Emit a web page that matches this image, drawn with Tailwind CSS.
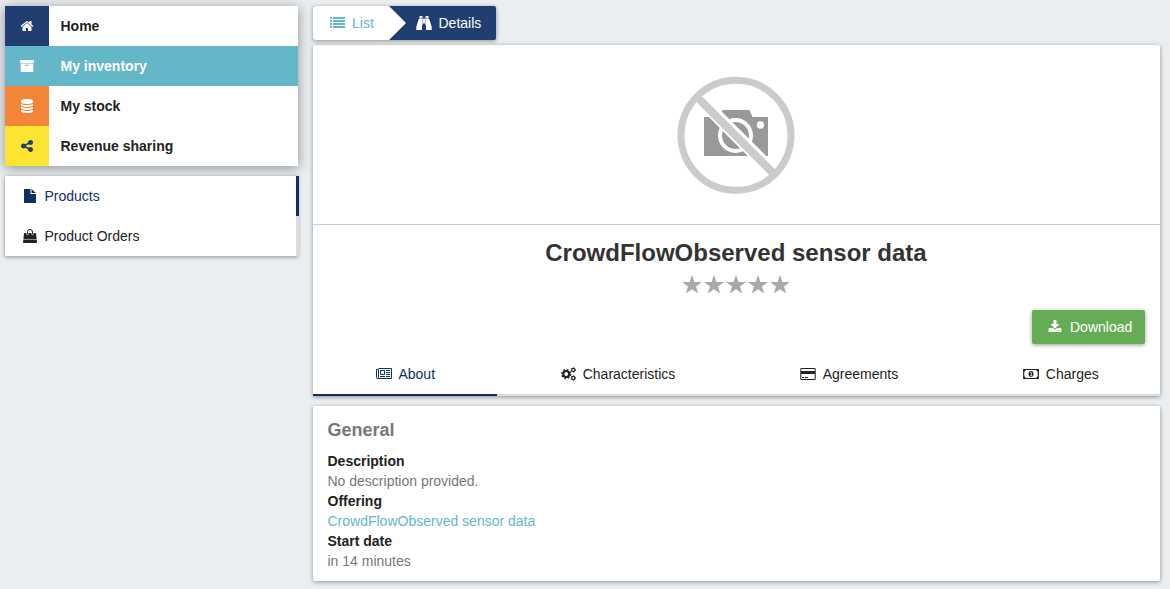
<!DOCTYPE html>
<html lang="en">
<head>
<meta charset="utf-8">
<title>My inventory</title>
<script src="https://cdn.jsdelivr.net/npm/@tailwindcss/browser@4"></script>
</head>
<body class="h-[589px] overflow-hidden bg-[#eaeef1] font-['Liberation_Sans',Arial,sans-serif] text-sm leading-5 text-[#222]">
<div class="flex gap-[15px] pt-1.5 pl-[5px]">
  <aside class="flex w-[293px] shrink-0 flex-col gap-2.5">
    <nav class="bg-white font-bold shadow-[0_2px_12px_rgba(0,0,0,0.4)]">
      <a class="flex h-10 items-center"><span class="flex h-10 w-11 items-center justify-center bg-[#203e6f] text-white"><svg class="size-3.5" viewBox="0 0 1792 1792" fill="currentColor"><path d="M1472 992v480q0 26-19 45t-45 19h-384v-384h-256v384h-384q-26 0-45-19t-19-45v-480q0-1 .5-3t.5-3l575-474 575 474q1 2 1 6zm223-69l-62 74q-8 9-21 11h-3q-13 0-21-7l-692-577-692 577q-12 8-24 7-13-2-21-11l-62-74q-8-10-7-23.5t11-21.5l719-599q32-26 76-26t76 26l244 204v-195q0-14 9-23t23-9h192q14 0 23 9t9 23v408l219 182q10 8 11 21.5t-7 23.5z"/></svg></span><span class="pl-[11.500px]">Home</span></a>
      <a class="flex h-10 items-center bg-[#64b6c9] text-white"><span class="flex h-10 w-11 items-center justify-center"><svg class="size-3.5" viewBox="0 0 14 14" fill="currentColor"><path d="M0 1h14v3H0zM.7 4.500h12.600V13H.7zM5.500 5.800a.5.5 0 0 0 0 1h3a.5.5 0 0 0 0-1z" fill-rule="evenodd"/></svg></span><span class="pl-[11.500px]">My inventory</span></a>
      <a class="flex h-10 items-center"><span class="flex h-10 w-11 items-center justify-center bg-[#f28538] text-white"><svg class="size-3.5" viewBox="0 0 1792 1792" fill="currentColor"><path d="M896 768q237 0 443-43t325-127v170q0 69-103 128t-280 93.5-385 34.5-385-34.5-280-93.5-103-128v-170q119 84 325 127t443 43zm0 768q237 0 443-43t325-127v170q0 69-103 128t-280 93.5-385 34.5-385-34.5-280-93.5-103-128v-170q119 84 325 127t443 43zm0-384q237 0 443-43t325-127v170q0 69-103 128t-280 93.5-385 34.5-385-34.5-280-93.5-103-128v-170q119 84 325 127t443 43zm0-1152q208 0 385 34.5t280 93.5 103 128v128q0 69-103 128t-280 93.5-385 34.5-385-34.5-280-93.5-103-128v-128q0-69 103-128t280-93.5 385-34.5z"/></svg></span><span class="pl-[11.500px]">My stock</span></a>
      <a class="flex h-10 items-center"><span class="flex h-10 w-11 items-center justify-center bg-[#fbe532] text-[#203e6f]"><svg class="size-3.5" viewBox="0 0 1792 1792" fill="currentColor"><path d="M1344 1024q133 0 226.5 93.5t93.5 226.5-93.5 226.5-226.5 93.5-226.5-93.5-93.5-226.5q0-12 2-34l-360-180q-92 86-218 86-133 0-226.5-93.5t-93.5-226.5 93.5-226.5 226.5-93.5q126 0 218 86l360-180q-2-22-2-34 0-133 93.5-226.5t226.5-93.5 226.500 93.500 93.500 226.500-93.500 226.500-226.500 93.500q-126 0-218-86l-360 180q2 22 2 34t-2 34l360 180q92-86 218-86z"/></svg></span><span class="pl-[11.500px]">Revenue sharing</span></a>
    </nav>
    <nav class="bg-white shadow-[0_1px_4px_rgba(0,0,0,0.4)]">
      <a class="-mr-px flex h-10 items-center gap-[7.500px] border-r-[3px] border-[#10305f] pl-[18px] text-[#10305f]"><svg class="size-3.5" viewBox="0 0 14 14" fill="currentColor"><path d="M1 0h6.500v5H13v9H1zM8.500 0 13 4H8.500z"/></svg>Products</a>
      <a class="-mr-px flex h-10 items-center gap-[7.500px] border-r-[3px] border-[#ddd] pl-[18px]"><svg class="size-3.5" viewBox="0 0 1792 1792" fill="currentColor"><path d="M1757 1408l35 313q3 28-16 50-19 21-48 21h-1664q-29 0-48-21-19-22-16-50l35-313h1722zm-93-839l86 775h-1708l86-775q3-24 21-40.500t43-16.500h256v128q0 53 37.500 90.500t90.500 37.500 90.500-37.500 37.500-90.500v-128h384v128q0 53 37.500 90.500t90.500 37.500 90.500-37.500 37.500-90.500v-128h256q25 0 43 16.500t21 40.500zm-384-185v256q0 26-19 45t-45 19-45-19-19-45v-256q0-106-75-181t-181-75-181 75-75 181v256q0 26-19 45t-45 19-45-19-19-45v-256q0-159 112.500-271.500t271.500-112.500 271.500 112.500 112.500 271.500z"/></svg>Product Orders</a>
    </nav>
  </aside>

  <main class="flex w-[847px] shrink-0 flex-col items-stretch">
    <div class="flex h-[34px] w-[183px] rounded-xs bg-[#203e6f] shadow-[0_1px_4px_rgba(0,0,0,0.4)]">
      <a class="flex w-[93px] items-center gap-[7px] rounded-l-xs bg-white pl-[17px] text-[#64b6c9] [clip-path:polygon(0_0,76px_0,93px_50%,76px_100%,0_100%)]"><svg class="h-3.5 w-[15px]" viewBox="0 0 15 14" fill="currentColor"><path d="M0 1h2v2H0zM3 1h12v2H3zM0 4h2v2H0zM3 4h12v2H3zM0 7h2v2H0zM3 7h12v2H3zM0 10h2v2H0zM3 10h12v2H3z"/></svg>List</a>
      <a class="flex items-center gap-[6.500px] pl-2.5 text-white"><svg class="h-3.5 w-4" viewBox="0 0 16 14" fill="currentColor"><path d="M3.500 0h3v2h-3zM9.500 0h3v2h-3zM3 2.500h3.700v6.300H6V14H.3v-3.300zM9.300 2.500H13l2.700 8.200V14H10V8.800h-.7zM7.100 2.500h1.800v5H7.100z"/></svg>Details</a>
    </div>

    <section class="mt-[5px] h-[351px] rounded-t-xs bg-white shadow-[0_1px_4px_rgba(0,0,0,0.4)]">
      <div class="flex h-[180px] items-center justify-center border-b border-[#ccc] pr-px">
        <svg class="size-[118px]" viewBox="0 0 118 118">
          <path d="M27 41h16.500l2-7h27l3 7H91v39H27z" fill="#999"/>
          <circle cx="58.500" cy="59.500" r="15.500" fill="#999" stroke="#fff" stroke-width="4"/>
          <circle cx="83.500" cy="49" r="3.700" fill="#fff"/>
          <path d="m20 20 78 78" stroke="#fff" stroke-width="13"/>
          <path d="m19 20 78 78" stroke="#cbcbcb" stroke-width="8"/>
          <circle cx="59" cy="59.300" r="55" fill="none" stroke="#cbcbcb" stroke-width="7"/>
        </svg>
      </div>
      <h1 class="pt-[15px] pr-px text-center text-2xl leading-[26px] font-bold text-[#333]">CrowdFlowObserved sensor data</h1>
      <div class="mt-2 flex h-5 justify-center gap-0.5 pr-[1.500px] text-[#a9a9a9]">
        <svg class="size-5" viewBox="0 0 20 20" fill="currentColor"><path d="m10 .8 2.400 7.100H20l-6 4.500 2.200 7.200L10 15.200l-6.200 4.400L6 12.400 0 7.900h7.600z"/></svg>
        <svg class="size-5" viewBox="0 0 20 20" fill="currentColor"><path d="m10 .8 2.400 7.100H20l-6 4.500 2.200 7.200L10 15.200l-6.200 4.400L6 12.400 0 7.900h7.600z"/></svg>
        <svg class="size-5" viewBox="0 0 20 20" fill="currentColor"><path d="m10 .8 2.400 7.100H20l-6 4.500 2.200 7.200L10 15.200l-6.200 4.400L6 12.400 0 7.900h7.600z"/></svg>
        <svg class="size-5" viewBox="0 0 20 20" fill="currentColor"><path d="m10 .8 2.400 7.100H20l-6 4.500 2.200 7.200L10 15.200l-6.200 4.400L6 12.400 0 7.900h7.600z"/></svg>
        <svg class="size-5" viewBox="0 0 20 20" fill="currentColor"><path d="m10 .8 2.400 7.100H20l-6 4.500 2.200 7.200L10 15.200l-6.200 4.400L6 12.400 0 7.900h7.600z"/></svg>
      </div>
      <div class="mt-4 flex justify-end pr-[15px]">
        <button class="flex h-[34px] w-[113px] items-center gap-2 rounded-xs bg-[#65ac54] pl-4 text-white shadow-[0_1px_4px_rgba(0,0,0,0.4)]"><svg class="size-3.5" viewBox="0 0 1792 1792" fill="currentColor"><path d="M1344 1344q0-26-19-45t-45-19-45 19-19 45 19 45 45 19 45-19 19-45zm256 0q0-26-19-45t-45-19-45 19-19 45 19 45 45 19 45-19 19-45zm128-224v320q0 40-28 68t-68 28h-1472q-40 0-68-28t-28-68v-320q0-40 28-68t68-28h465l135 136q58 56 136 56t136-56l136-136h464q40 0 68 28t28 68zm-325-569q17 41-14 70l-448 448q-18 19-45 19t-45-19l-448-448q-31-29-14-70 17-39 59-39h256v-448q0-26 19-45t45-19h256q26 0 45 19t19 45v448h256q42 0 59 39z"/></svg>Download</button>
      </div>
      <div class="mt-2.5 flex h-[42px]">
        <a class="flex w-[184px] items-center justify-center gap-[6.500px] border-b-2 border-[#10305f] pl-px text-[#10305f]"><svg class="h-3.5 w-4" viewBox="0 0 16 14" fill="none" stroke="currentColor"><path d="M2.500 1.500h13v10H1.500a1 1 0 0 1-1-1v-8h2v8a1 1 0 0 1-1 1M4.500 3.500h4v4h-4zM10 3.500h4M10 5.500h4M10 7.500h4M4 9.500h5M10 9.500h4"/></svg>About</a>
        <a class="flex w-[241px] items-center justify-center gap-[7px] border-b-2 border-[#ddd] pl-px"><svg class="h-3.5 w-[15px]" viewBox="0 0 15 14" fill="none" stroke="currentColor"><circle cx="5.200" cy="7" r="3" stroke-width="2.200"/><circle cx="5.200" cy="7" r="4.500" stroke-width="1.300" stroke-dasharray="1.800 1.734"/><circle cx="12.300" cy="2.900" r="1.600" stroke-width="1.200"/><circle cx="12.300" cy="2.900" r="2.300" stroke-width=".8" stroke-dasharray="1.200 1.209"/><circle cx="12.300" cy="11" r="1.600" stroke-width="1.200"/><circle cx="12.300" cy="11" r="2.300" stroke-width=".8" stroke-dasharray="1.200 1.209"/></svg>Characteristics</a>
        <a class="flex w-[222px] items-center justify-center gap-[7px] border-b-2 border-[#ddd]"><svg class="h-3.5 w-4" viewBox="0 0 16 14" fill="currentColor"><path fill-rule="evenodd" d="M1.300 1h13.400A1 1 0 0 1 15.700 2v10a1 1 0 0 1-1 1H1.300A1 1 0 0 1 .3 12V2A1 1 0 0 1 1.300 1zM1.300 2v2h13.400V2zM1.300 7v5h13.400V7zM2 10h2v1H2zM5 10h3v1H5z"/></svg>Agreements</a>
        <a class="flex w-[200px] items-center justify-center gap-[7px] border-b-2 border-[#ddd] pl-[1.500px]"><svg class="h-3.5 w-4" viewBox="0 0 16 14" fill="none" stroke="currentColor"><path d="M.7 2.500h14.600v9H.7z" stroke-width="1.200"/><path d="M1 2h3L1 5zM15 2v3l-3-3zM1 12V9l3 3zM15 12h-3l3-3z" fill="currentColor" stroke="none"/><ellipse cx="8" cy="7" rx="2.500" ry="3" fill="currentColor" stroke="none"/><path d="M7 5.500h1.300v3M7 8.700h2.300" stroke="#fff" stroke-width=".7"/></svg>Charges</a>
      </div>
    </section>

    <section class="mt-2.5 h-[175px] rounded-xs bg-white px-[14.500px] pt-[14px] shadow-[0_1px_4px_rgba(0,0,0,0.4)]">
      <h2 class="mb-[11px] text-lg leading-5 font-bold text-[#777]">General</h2>
      <dl>
        <dt class="font-bold text-[#222]">Description</dt><dd class="text-[#777]">No description provided.</dd>
        <dt class="font-bold text-[#222]">Offering</dt><dd class="text-[#64b6c9]">CrowdFlowObserved sensor data</dd>
        <dt class="font-bold text-[#222]">Start date</dt><dd class="text-[#777]">in 14 minutes</dd>
      </dl>
    </section>
  </main>
</div>
</body>
</html>
